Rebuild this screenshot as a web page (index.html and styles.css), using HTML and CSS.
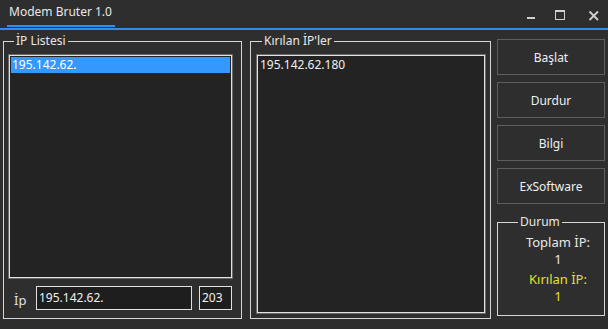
FILE: index.html
```html
<!DOCTYPE html>
<html lang="tr">
<head>
<meta charset="utf-8">
<title>Modem Bruter 1.0</title>
<link rel="stylesheet" href="styles.css">
</head>
<body>
<div class="window">
  <header class="titlebar">
    <div class="tab">Modem Bruter 1.0</div>
    <div class="controls">
      <svg class="ctl ctl-min" width="12" height="12" viewBox="0 0 12 12"><rect x="2" y="8" width="8" height="2" fill="#d0d0d0"/></svg>
      <svg class="ctl ctl-max" width="12" height="12" viewBox="0 0 12 12"><rect x="1.5" y="0.5" width="9" height="9" fill="none" stroke="#d0d0d0" stroke-width="1"/><rect x="1" y="0" width="10" height="2" fill="#d0d0d0"/></svg>
      <svg class="ctl ctl-close" width="12" height="12" viewBox="0 0 12 12"><path d="M1.5 1.5 L10 10 M10 1.5 L1.5 10" stroke="#d0d0d0" stroke-width="1.8" fill="none"/></svg>
    </div>
  </header>
  <main class="content">
    <fieldset class="group group-list">
      <legend>İP Listesi</legend>
      <div class="listbox listbox-left">
        <div class="item selected">195.142.62.</div>
      </div>
      <div class="iprow">
        <span class="iplabel">İp</span>
        <div class="textbox textbox-ip">195.142.62.</div>
        <div class="textbox textbox-num">203</div>
      </div>
    </fieldset>
    <fieldset class="group group-cracked">
      <legend>Kırılan İP'ler</legend>
      <div class="listbox listbox-right">
        <div class="item">195.142.62.180</div>
      </div>
    </fieldset>
    <div class="side">
      <div class="btn">Başlat</div>
      <div class="btn">Durdur</div>
      <div class="btn">Bilgi</div>
      <div class="btn">ExSoftware</div>
      <fieldset class="group group-status">
        <legend>Durum</legend>
        <div class="stats">
          <div class="stat">Toplam İP:<br>1</div>
          <div class="stat stat-yellow">Kırılan İP:<br>1</div>
        </div>
      </fieldset>
    </div>
  </main>
</div>
</body>
</html>
```
FILE: styles.css
```css
* { box-sizing: border-box; }
html, body {
  margin: 0;
  padding: 0;
  background: #2e2e2e;
}
body {
  font-family: "Noto Sans", "DejaVu Sans", sans-serif;
  font-size: 12px;
  color: #e8e8e8;
  width: 608px;
  height: 329px;
  overflow: hidden;
}
.titlebar {
  height: 30px;
  border-bottom: 2px solid #2b8ff0;
  display: flex;
  justify-content: space-between;
  align-items: flex-start;
}
.tab {
  margin-left: 7px;
  width: 108px;
  padding: 4px 0 0 2px;
  height: 27px;
  line-height: 16px;
  border-bottom: 2px solid #2b8ff0;
  color: #e8e8e8;
}
.controls {
  display: flex;
  align-items: flex-start;
  padding-top: 9px;
  padding-right: 8px;
}
.ctl { display: block; }
.ctl-min { margin-right: 17px; }
.ctl-max { margin-right: 22px; margin-top: 1px; }
.ctl-close { margin-top: 1px; }

.content {
  display: flex;
  align-items: stretch;
  padding: 3px 0 0 3px;
  height: 289px;
}
.group {
  margin: 0;
  padding: 0;
  border: 1px solid #d6d6d6;
  min-width: 0;
  text-align: left;
}
.group legend {
  margin-left: 5px;
  padding: 0 2px;
  line-height: 16px;
  color: #e8e8e8;
}
.group-list {
  width: 239px;
  padding: 6px 0 0 5px;
}
.group-cracked {
  width: 241px;
  margin-left: 8px;
  padding: 6px 0 0 6px;
}
.listbox {
  background: #232323;
  border: 1px solid #e2e2e2;
  box-shadow: 0 0 0 1px #6a6a6a;
  padding: 1px;
}
.listbox-left {
  width: 223px;
  height: 223px;
}
.listbox-right {
  width: 228px;
  height: 258px;
}
.item {
  height: 16px;
  line-height: 16px;
  padding-left: 1px;
  color: #f0f0f0;
}
.item.selected {
  background: #3399ff;
  color: #ffffff;
}
.iprow {
  display: flex;
  align-items: center;
  margin-top: 8px;
  height: 24px;
}
.iplabel {
  width: 27px;
  padding-left: 5px;
  font-size: 13px;
  color: #e0e0e0;
  padding-top: 4px;
}
.textbox {
  height: 24px;
  background: #1e1e1e;
  border: 1px solid #e2e2e2;
  line-height: 21px;
  padding-left: 2px;
  color: #f0f0f0;
  font-size: 12px;
}
.textbox-ip { width: 156px; }
.textbox-num { width: 33px; margin-left: 7px; }

.side {
  width: 108px;
  margin-left: 6px;
  display: flex;
  flex-direction: column;
  gap: 7px;
  padding-top: 6px;
}
.btn {
  height: 36px;
  border: 1px solid #5e5e5e;
  display: flex;
  align-items: center;
  justify-content: center;
  color: #f0f0f0;
}
.group-status {
  margin-top: 3px;
  height: 102px;
  width: 108px;
  padding: 4px 0 0 14px;
}
.group-status legend { margin-left: 6px; }
.stats { text-align: center; }
.stat {
  font-size: 13px;
  line-height: 17px;
  color: #e8e8e8;
}
.stat + .stat { margin-top: 3px; }
.stat-yellow { color: #e2e21e; }
```
